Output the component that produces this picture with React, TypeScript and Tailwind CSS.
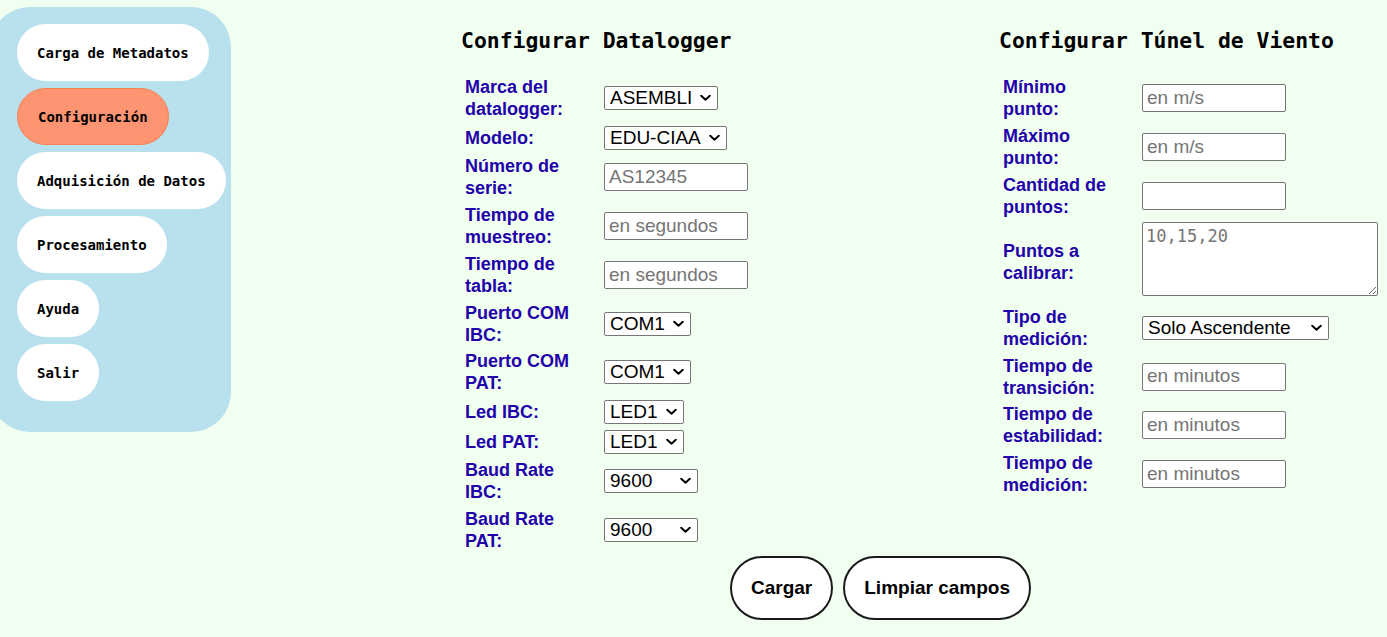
import React from "react";

const mono = { fontFamily: '"DejaVu Sans Mono", "Liberation Mono", monospace' };
const sans = { fontFamily: '"Liberation Sans", Arial, sans-serif' };

function NavButton({ label, active }: { label: string; active?: boolean }) {
  return (
    <button
      style={mono}
      className={
        "h-[57px] px-[20px] pt-[2px] rounded-full text-[14px] font-bold text-black text-left whitespace-nowrap " +
        (active ? "bg-[#fe9471] border border-[#f7804f]" : "bg-white")
      }
    >
      {label}
    </button>
  );
}

function Chevron() {
  return (
    <svg
      width="11"
      height="7"
      viewBox="0 0 11 7"
      className="absolute right-[7px] top-1/2 -translate-y-1/2 pointer-events-none"
    >
      <path d="M1.2 1.2 L5.5 5.3 L9.8 1.2" fill="none" stroke="#000" strokeWidth="1.9" strokeLinecap="round" strokeLinejoin="round" />
    </svg>
  );
}

function Select({ value, width, options }: { value: string; width: number; options?: string[] }) {
  const opts = options ?? [value];
  return (
    <div className="relative" style={{ width }}>
      <select
        defaultValue={value}
        style={sans}
        className="appearance-none w-full h-[24px] pl-[5px] pr-[20px] text-[19px] leading-[22px] text-black bg-white border border-[#767676] rounded-[2px]"
      >
        {opts.map((o) => (
          <option key={o} value={o}>
            {o}
          </option>
        ))}
      </select>
      <Chevron />
    </div>
  );
}

function TextInput({ placeholder }: { placeholder?: string }) {
  return (
    <input
      type="text"
      placeholder={placeholder}
      style={sans}
      className="w-[144px] h-[28px] px-[4px] text-[19px] text-black bg-white border border-[#767676] rounded-[2px] placeholder:text-[#757575]"
    />
  );
}

function Row({
  label,
  children,
  h,
  top,
}: {
  label: string;
  children: React.ReactNode;
  h: number;
  top?: boolean;
}) {
  return (
    <div className="flex items-center" style={{ height: h }}>
      <div className="w-[143px] shrink-0 pl-[4px] pr-[23px]">
        <div style={sans} className="text-[18px] leading-[22px] font-bold text-[#2200aa]">
          {label}
        </div>
      </div>
      <div className={top ? "self-start pt-[2px]" : ""}>{children}</div>
    </div>
  );
}

function Heading({ children }: { children: React.ReactNode }) {
  return (
    <h2 style={mono} className="mt-[27px] h-[28px] leading-[28px] text-[21.4px] font-bold text-black whitespace-nowrap">
      {children}
    </h2>
  );
}

const H2 = 48.8;

export default function App() {
  return (
    <div className="min-h-[637px] w-full bg-[#f0fff0] flex items-start overflow-hidden">
      <nav className="shrink-0 -ml-[10px] mt-[7px] w-[241px] bg-[#b9e0ed] rounded-[40px] pt-[17px] pb-[31px] pl-[27px] flex flex-col items-start gap-[7px]">
        <NavButton label="Carga de Metadatos" />
        <NavButton label="Configuración" active />
        <NavButton label="Adquisición de Datos" />
        <NavButton label="Procesamiento" />
        <NavButton label="Ayuda" />
        <NavButton label="Salir" />
      </nav>

      <main className="ml-[230px] flex flex-col">
        <div className="flex items-start">
          <section className="w-[538px] shrink-0">
            <Heading>Configurar Datalogger</Heading>
            <div className="mt-[19px] flex flex-col">
              <Row label="Marca del datalogger:" h={H2}>
                <Select value="ASEMBLI" width={114} />
              </Row>
              <Row label="Modelo:" h={30}>
                <Select value="EDU-CIAA" width={123} />
              </Row>
              <Row label="Número de serie:" h={H2}>
                <TextInput placeholder="AS12345" />
              </Row>
              <Row label="Tiempo de muestreo:" h={H2}>
                <TextInput placeholder="en segundos" />
              </Row>
              <Row label="Tiempo de tabla:" h={H2}>
                <TextInput placeholder="en segundos" />
              </Row>
              <Row label="Puerto COM IBC:" h={H2}>
                <Select value="COM1" width={87} />
              </Row>
              <Row label="Puerto COM PAT:" h={H2}>
                <Select value="COM1" width={87} />
              </Row>
              <Row label="Led IBC:" h={30}>
                <Select value="LED1" width={80} />
              </Row>
              <Row label="Led PAT:" h={30}>
                <Select value="LED1" width={80} />
              </Row>
              <Row label="Baud Rate IBC:" h={H2}>
                <Select value="9600" width={94} />
              </Row>
              <Row label="Baud Rate PAT:" h={H2}>
                <Select value="9600" width={94} />
              </Row>
            </div>
          </section>

          <section className="shrink-0">
            <Heading>Configurar Túnel de Viento</Heading>
            <div className="mt-[19px] flex flex-col">
              <Row label="Mínimo punto:" h={H2}>
                <TextInput placeholder="en m/s" />
              </Row>
              <Row label="Máximo punto:" h={H2}>
                <TextInput placeholder="en m/s" />
              </Row>
              <Row label="Cantidad de puntos:" h={H2}>
                <TextInput />
              </Row>
              <Row label="Puntos a calibrar:" h={83} top>
                <textarea
                  placeholder="10,15,20"
                  style={mono}
                  className="block w-[236px] h-[74px] px-[3px] pt-[3px] text-[17px] leading-[20px] bg-white border border-[#767676] rounded-[2px] placeholder:text-[#757575]"
                />
              </Row>
              <Row label="Tipo de medición:" h={H2}>
                <Select value="Solo Ascendente" width={187} />
              </Row>
              <Row label="Tiempo de transición:" h={H2}>
                <TextInput placeholder="en minutos" />
              </Row>
              <Row label="Tiempo de estabilidad:" h={H2}>
                <TextInput placeholder="en minutos" />
              </Row>
              <Row label="Tiempo de medición:" h={H2}>
                <TextInput placeholder="en minutos" />
              </Row>
            </div>
          </section>
        </div>

        <div className="ml-[269px] mt-[2px] flex gap-[10px]">
          <button
            style={sans}
            className="h-[64px] px-[19px] rounded-full bg-white border-2 border-[#1a1a1a] text-[19px] font-bold text-black"
          >
            Cargar
          </button>
          <button
            style={sans}
            className="h-[64px] px-[19px] rounded-full bg-white border-2 border-[#1a1a1a] text-[19px] font-bold text-black"
          >
            Limpiar campos
          </button>
        </div>
      </main>
    </div>
  );
}
